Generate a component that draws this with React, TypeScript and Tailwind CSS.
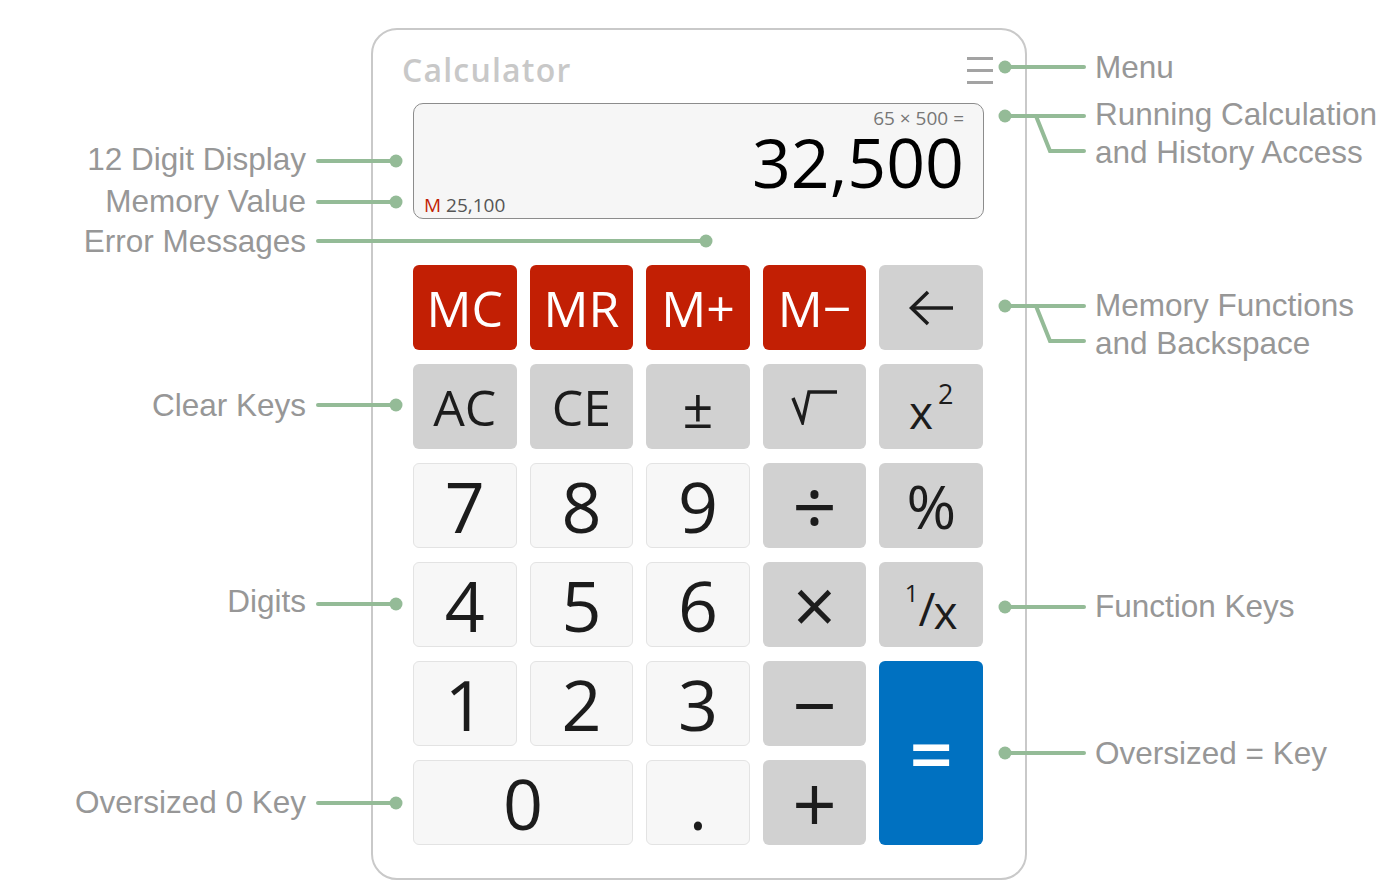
import React from "react";

type Tone = "red" | "fn" | "digit" | "blue";

const tones: Record<Tone, string> = {
    red: "bg-[#c21f04] text-white",
    fn: "bg-[#d1d1d1] text-[#1c1c1c]",
    digit: "bg-[#f7f7f7] text-[#1c1c1c] border border-[#e3e3e3]",
    blue: "bg-[#0071c1] text-white",
};

function Key({ tone, className = "", children }: { tone: Tone; className?: string; children: React.ReactNode }) {
    return (
        <div className={`flex items-center justify-center rounded-[6px] leading-none ${tones[tone]} ${className}`}>
            {children}
        </div>
    );
}

const Dot = ({ x, y }: { x: number; y: number }) => <circle cx={x} cy={y} r={6.5} fill="#94bb97" />;

export default function App() {
    const green = "#94bb97";

    const leftLabels = [
        { text: "12 Digit Display", top: "top-[143px]" },
        { text: "Memory Value", top: "top-[185px]" },
        { text: "Error Messages", top: "top-[225px]" },
        { text: "Clear Keys", top: "top-[389px]" },
        { text: "Digits", top: "top-[585px]" },
        { text: "Oversized 0 Key", top: "top-[786px]" },
    ];

    const rightLabels = [
        { lines: ["Menu"], top: "top-[51px]" },
        { lines: ["Running Calculation", "and History Access"], top: "top-[98px]" },
        { lines: ["Memory Functions", "and Backspace"], top: "top-[289px]" },
        { lines: ["Function Keys"], top: "top-[590px]" },
        { lines: ["Oversized = Key"], top: "top-[737px]" },
    ];

    return (
        <div className="relative w-[1398px] h-[892px] bg-white overflow-hidden font-['Open_Sans',sans-serif]">
            <div className="pt-[28px]">
                {/* calculator card */}
                <div className="mx-auto w-[656px] h-[852px] border-2 border-[#c9c9c9] rounded-[26px] pt-[24px] pb-[33px] flex flex-col">
                    <div className="flex items-center justify-between pl-[29px] pr-[32px] h-[32px]">
                        <span className="text-[32px] leading-[32px] font-semibold tracking-[1.2px] text-[#c8c8c8]">Calculator</span>
                        <div className="flex flex-col gap-[9px] w-[26px]">
                            <div className="h-[3px] bg-[#a3a3a3]" />
                            <div className="h-[3px] bg-[#a3a3a3]" />
                            <div className="h-[3px] bg-[#a3a3a3]" />
                        </div>
                    </div>

                    {/* display */}
                    <div className="ml-[40px] w-[571px] mt-[17px] h-[116px] border border-[#8c8c8c] rounded-[10px] bg-[#f6f6f6] flex flex-col pt-[4px] pl-[10px] pr-[19px]">
                        <div className="text-right text-[19px] leading-[20px] text-[#777]">65 × 500 =</div>
                        <div className="text-right text-[68px] leading-[68px] text-black">32,500</div>
                        <div className="text-[19px] leading-[18px] text-[#555]">
                            <span className="text-[#c21f04]">M</span> 25,100
                        </div>
                    </div>

                    {/* keypad */}
                    <div className="ml-[40px] w-[570px] mt-[46px] grid grid-cols-5 grid-rows-[repeat(6,85px)] gap-x-[13px] gap-y-[14px]">
                        <Key tone="red" className="text-[50px]">MC</Key>
                        <Key tone="red" className="text-[50px]">MR</Key>
                        <Key tone="red" className="text-[50px]">M+</Key>
                        <Key tone="red" className="text-[50px]">M−</Key>
                        <Key tone="fn">
                            <svg width="48" height="36" viewBox="0 0 48 36" fill="none" stroke="#1c1c1c" strokeWidth="3.5" strokeLinecap="butt">
                                <path d="M46 18H4" />
                                <path d="M21 2L4.5 18L21 34" />
                            </svg>
                        </Key>

                        <Key tone="fn" className="text-[50px]">AC</Key>
                        <Key tone="fn" className="text-[50px]">CE</Key>
                        <Key tone="fn" className="text-[54px]">±</Key>
                        <Key tone="fn">
                            <svg width="48" height="36" viewBox="0 0 48 36" fill="none" stroke="#1c1c1c" strokeWidth="3.5" strokeLinejoin="miter">
                                <path d="M2 9L11.5 33L18 3H46" />
                            </svg>
                        </Key>
                        <Key tone="fn">
                            <span className="text-[46px] mt-[8px]">x</span>
                            <span className="text-[27px] mb-[26px] ml-[5px]">2</span>
                        </Key>

                        <Key tone="digit" className="text-[70px]">7</Key>
                        <Key tone="digit" className="text-[70px]">8</Key>
                        <Key tone="digit" className="text-[70px]">9</Key>
                        <Key tone="fn" className="text-[78px]">÷</Key>
                        <Key tone="fn" className="text-[60px]">%</Key>

                        <Key tone="digit" className="text-[70px]">4</Key>
                        <Key tone="digit" className="text-[70px]">5</Key>
                        <Key tone="digit" className="text-[70px]">6</Key>
                        <Key tone="fn" className="text-[76px]">×</Key>
                        <Key tone="fn">
                            <span className="text-[24px] mb-[24px]">1</span>
                            <span className="text-[46px] mt-[6px]">/</span>
                            <span className="text-[46px] mt-[12px] -ml-[2px]">x</span>
                        </Key>

                        <Key tone="digit" className="text-[70px]">1</Key>
                        <Key tone="digit" className="text-[70px]">2</Key>
                        <Key tone="digit" className="text-[70px]">3</Key>
                        <Key tone="fn" className="text-[78px]">−</Key>
                        <Key tone="blue" className="row-span-2 text-[76px] font-semibold">=</Key>

                        <Key tone="digit" className="col-span-2 text-[70px]">0</Key>
                        <Key tone="digit" className="text-[70px]">.</Key>
                        <Key tone="fn" className="text-[78px]">+</Key>
                    </div>
                </div>
            </div>

            {/* callout lines */}
            <svg className="absolute inset-0 pointer-events-none" width="1398" height="892" viewBox="0 0 1398 892" fill="none">
                <g stroke={green} strokeWidth="4" strokeLinecap="round">
                    <path d="M318 161H396" />
                    <path d="M318 202H396" />
                    <path d="M318 241H706" />
                    <path d="M318 405H396" />
                    <path d="M318 604H396" />
                    <path d="M318 803H396" />
                    <path d="M1005 67H1084" />
                    <path d="M1005 116H1084" />
                    <path d="M1036 116L1050 151H1084" />
                    <path d="M1005 306H1084" />
                    <path d="M1036 306L1050 341H1084" />
                    <path d="M1005 607H1084" />
                    <path d="M1005 753H1084" />
                </g>
                <Dot x={396} y={161} />
                <Dot x={396} y={202} />
                <Dot x={706} y={241} />
                <Dot x={396} y={405} />
                <Dot x={396} y={604} />
                <Dot x={396} y={803} />
                <Dot x={1005} y={67} />
                <Dot x={1005} y={116} />
                <Dot x={1005} y={306} />
                <Dot x={1005} y={607} />
                <Dot x={1005} y={753} />
            </svg>

            {/* callout labels */}
            {leftLabels.map((l) => (
                <div key={l.text} className={`absolute left-0 w-[306px] text-right ${l.top} font-['Liberation_Sans',Arial,sans-serif] text-[31.5px] leading-[32px] text-[#979797]`}>
                    {l.text}
                </div>
            ))}
            {rightLabels.map((l) => (
                <div key={l.lines[0]} className={`absolute left-[1095px] ${l.top} font-['Liberation_Sans',Arial,sans-serif] text-[31.5px] text-[#979797] whitespace-nowrap`}>
                    {l.lines.map((t) => (
                        <div key={t} className="h-[38px] leading-[32px]">{t}</div>
                    ))}
                </div>
            ))}
        </div>
    );
}
